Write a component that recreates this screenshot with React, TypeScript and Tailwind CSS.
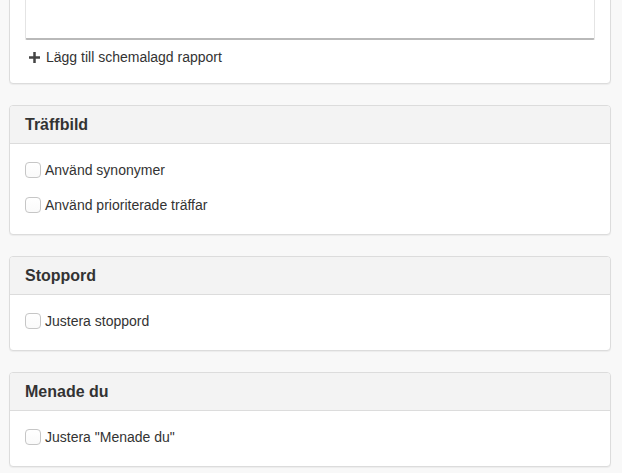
import React from "react";

type Panel = { title: string; options: string[] };

const panels: Panel[] = [
  { title: "Träffbild", options: ["Använd synonymer", "Använd prioriterade träffar"] },
  { title: "Stoppord", options: ["Justera stoppord"] },
  { title: "Menade du", options: ['Justera "Menade du"'] },
];

function Checkbox({ label }: { label: string }) {
  return (
    <label className="flex h-5 items-center text-[14px] text-[#333]">
      <span className="h-4 w-4 shrink-0 rounded-[4px] border border-[#c6c6c6] bg-gradient-to-b from-white to-[#fafafa]" />
      <span className="ml-[4px] leading-5">{label}</span>
    </label>
  );
}

function PlusIcon() {
  return (
    <svg width="11" height="11" viewBox="0 0 11 11" className="shrink-0">
      <rect x="0" y="4.25" width="11" height="2.5" fill="#444" />
      <rect x="4.25" y="0" width="2.5" height="11" fill="#444" />
    </svg>
  );
}

export default function App() {
  return (
    <div
      className="min-h-[473px] overflow-hidden bg-[#f8f8f8] pb-5 pl-[9px] pr-[11px]"
      style={{ fontFamily: '"Liberation Sans", Arial, sans-serif' }}
    >
      {/* Scheduled reports panel (top cut off) */}
      <div className="-mt-[76px] rounded-[4px] border border-[#dcdcdc] bg-white px-[15px] pb-4 pt-[15px] shadow-[0_1px_1px_rgba(0,0,0,0.05)]">
        <div className="h-[100px] rounded-b-[2px] border-x border-t border-b-2 border-x-[#e4e4e4] border-t-[#e4e4e4] border-b-[#b9b9b9] bg-white" />
        <button className="mt-[7px] flex h-5 items-center gap-[6px] pl-[4px] text-[14px] text-[#333]">
          <PlusIcon />
          <span>Lägg till schemalagd rapport</span>
        </button>
      </div>

      {panels.map((p) => (
        <div
          key={p.title}
          className="mt-[21px] overflow-hidden rounded-[4px] border border-[#dcdcdc] bg-white shadow-[0_1px_1px_rgba(0,0,0,0.05)]"
        >
          <div className="flex h-[38px] items-center border-b border-[#dcdcdc] bg-[#f3f3f3] px-[15px]">
            <h3 className="text-[16px] font-bold leading-[18px] text-[#333]">{p.title}</h3>
          </div>
          <div className="flex flex-col gap-[15px] px-[15px] pb-[19px] pt-4">
            {p.options.map((o) => (
              <Checkbox key={o} label={o} />
            ))}
          </div>
        </div>
      ))}
    </div>
  );
}
